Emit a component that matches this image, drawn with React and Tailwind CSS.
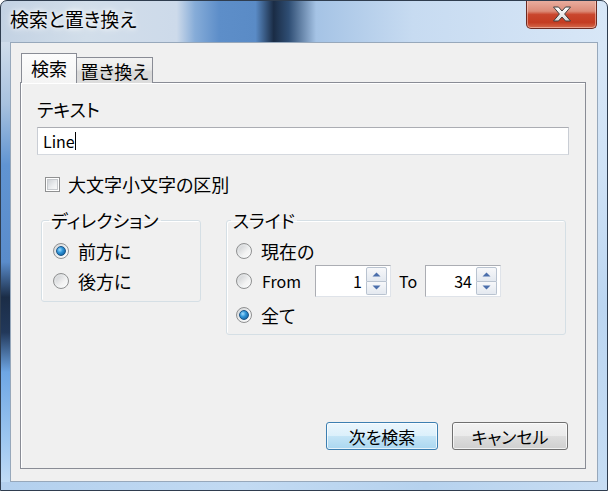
import React from "react";

const Radio = ({ checked }) => (
  <span className="flex h-[16px] w-[16px] shrink-0 items-center justify-center rounded-full border border-[#8f9091] bg-[linear-gradient(135deg,#d2d4d6_0%,#eef0f1_55%,#ffffff_100%)]">
    {checked ? (
      <span className="h-[10px] w-[10px] rounded-full border border-[#1a5588] bg-[radial-gradient(circle_at_35%_35%,#9fdcff_0%,#2f95d8_40%,#0b4f8c_100%)]" />
    ) : (
      <span className="h-[10px] w-[10px] rounded-full bg-[linear-gradient(135deg,#cfd1d4_0%,#f4f4f4_70%)]" />
    )}
  </span>
);

const Arrow = ({ up }) => (
  <svg width="9" height="5" viewBox="0 0 9 5">
    <path d={up ? "M0.5 4.5 L4.5 0.5 L8.5 4.5 Z" : "M0.5 0.5 L4.5 4.5 L8.5 0.5 Z"} fill="#4a6eab" />
  </svg>
);

const Spin = ({ value }) => (
  <div className="flex h-[32px] w-[76px] items-center border border-[#abadb3] border-b-[#dfe3e9] border-r-[#dfe3e9] bg-white pr-[3px]">
    <span className="flex-1 pr-[4px] text-right text-[16px] leading-none">{value}</span>
    <div className="flex h-[28px] w-[21px] flex-col">
      <div className="flex flex-1 items-center justify-center rounded-t-[2px] border border-[#b9c3d0] bg-[linear-gradient(180deg,#f7f8fa_0%,#e4e9f0_100%)]">
        <Arrow up />
      </div>
      <div className="flex flex-1 items-center justify-center rounded-b-[2px] border border-t-0 border-[#b9c3d0] bg-[linear-gradient(180deg,#f7f8fa_0%,#e4e9f0_100%)]">
        <Arrow />
      </div>
    </div>
  </div>
);

const App = () => {
  return (
    <div className="flex h-[491px] w-[608px] flex-col overflow-hidden rounded-t-[7px] border border-[#2f3d4f] bg-[linear-gradient(90deg,#c3d2e3_0%,#d2deea_14%,#cddaea_29%,#86acd8_32%,#5d8ec9_36%,#5a8bc6_42%,#1a2c45_45%,#2f4e74_47.5%,#a5c3e5_52%,#c7dbf1_68%,#d8e7f7_100%)] font-['Noto_Sans_CJK_JP',sans-serif] text-black [font-feature-settings:'palt']">
      {/* title bar */}
      <div className="flex h-[41px] items-start justify-between pl-[9px] pr-[10px]">
        <span className="mt-[5px] text-[19px] leading-[26px] [text-shadow:0_0_8px_#ffffff,0_0_4px_#ffffff]">
          検索と置き換え
        </span>
        <button className="-mt-px flex h-[29px] w-[71px] items-center justify-center rounded-b-[5px] border border-t-0 border-[#6b2a22] bg-[linear-gradient(180deg,#eab0a2_0%,#dc8b78_40%,#c9462d_52%,#c43c22_80%,#d46a4c_100%)] shadow-[inset_0_0_0_1px_rgba(255,220,210,0.5)]">
          <svg width="20" height="16" viewBox="0 0 20 16">
            <defs>
              <linearGradient id="xg" x1="0" y1="0" x2="0" y2="1">
                <stop offset="0" stopColor="#ffffff" />
                <stop offset="1" stopColor="#d8d8d8" />
              </linearGradient>
            </defs>
            <path
              d="M1.5 1 H6.5 L10 5 L13.5 1 H18.5 L12.6 8 L18.5 15 H13.5 L10 11 L6.5 15 H1.5 L7.4 8 Z"
              fill="url(#xg)"
              stroke="#3d3d3d"
              strokeWidth="1"
              strokeLinejoin="round"
            />
          </svg>
        </button>
      </div>

      <div className="flex flex-1">
        <div className="w-[9px] bg-[linear-gradient(180deg,#cfdceb_0%,#a8c2df_14%,#6094d2_28%,#5a8ccb_50%,#1b2d47_58%,#22385a_66%,#6ea6e4_75%,#9cc6f0_90%,#c0dbf5_100%)]" />

        {/* client area */}
        <div className="flex flex-1 flex-col border border-[#97a8bb] bg-[#f0f0f0] pb-[12px] pl-[9px] pr-[11px] pt-[10px]">
          {/* tabs */}
          <div className="relative z-10 -mb-px flex items-end pl-px">
            <div className="flex h-[30px] w-[56px] items-center justify-center border border-b-0 border-[#898c95] bg-[linear-gradient(180deg,#fcfcfc_0%,#f4f4f4_100%)] pb-[2px] text-[18px] leading-none">
              検索
            </div>
            <div className="flex h-[26px] w-[76px] items-center justify-center border border-b-0 border-l-0 border-[#898c95] bg-[linear-gradient(180deg,#f3f3f3_0%,#e9e9e9_45%,#d9d9d9_55%,#dcdcdc_100%)] text-[18px] leading-none">
              置き換え
            </div>
          </div>

          {/* tab panel */}
          <div className="flex flex-1 flex-col border border-[#898c95] bg-[#f0f0f0] shadow-[inset_1px_1px_0_#ffffff]">
            <div className="flex flex-col pl-[16px] pt-[16px]">
              <span className="text-[18px] leading-[21px]">テキスト</span>
              <div className="mt-[7px] flex h-[28px] w-[532px] items-center border border-[#abadb3] border-b-[#d5d9df] border-l-[#c9cdd4] border-r-[#c9cdd4] bg-white pl-[5px]">
                <span className="text-[16px] leading-none">Line</span>
                <span className="h-[18px] w-px bg-black" />
              </div>

              <div className="ml-[8px] mt-[19px] flex h-[20px] items-center gap-[8px]">
                <span className="flex h-[15px] w-[15px] items-center justify-center border border-[#8f9091] bg-white">
                  <span className="h-[11px] w-[11px] border border-[#c6c9cd] bg-[linear-gradient(135deg,#cfd2d6_0%,#eceef0_60%,#f8f8f8_100%)]" />
                </span>
                <span className="text-[18px] leading-none">大文字小文字の区別</span>
              </div>

              <div className="mt-[17px] flex items-start">
                <fieldset className="ml-[4px] w-[160px] rounded-[3px] border border-[#d5dfe5] pb-[10px] pl-[7px] shadow-[inset_1px_1px_0_#ffffff]">
                  <legend className="px-[2px] text-[18px] leading-[19px]">ディレクション</legend>
                  <div className="ml-[4px] mt-[11px] flex h-[20px] items-center gap-[9px]">
                    <Radio checked />
                    <span className="text-[18px] leading-none">前方に</span>
                  </div>
                  <div className="ml-[4px] mt-[10px] flex h-[20px] items-center gap-[9px]">
                    <Radio />
                    <span className="text-[18px] leading-none">後方に</span>
                  </div>
                </fieldset>

                <fieldset className="ml-[25px] w-[340px] rounded-[3px] border border-[#d5dfe5] pb-[9px] pl-[4px] shadow-[inset_1px_1px_0_#ffffff]">
                  <legend className="px-[2px] text-[18px] leading-[19px]">スライド</legend>
                  <div className="ml-[5px] mt-[11px] flex h-[20px] items-center gap-[9px]">
                    <Radio />
                    <span className="text-[18px] leading-none">現在の</span>
                  </div>
                  <div className="ml-[5px] mt-[4px] flex h-[32px] items-center">
                    <Radio />
                    <span className="ml-[10px] w-[53px] text-[16px] leading-none">From</span>
                    <Spin value="1" />
                    <span className="w-[34px] pl-[8px] text-[16px] leading-none">To</span>
                    <Spin value="34" />
                  </div>
                  <div className="ml-[5px] mt-[8px] flex h-[20px] items-center gap-[9px]">
                    <Radio checked />
                    <span className="text-[18px] leading-none">全て</span>
                  </div>
                </fieldset>
              </div>
            </div>

            {/* buttons */}
            <div className="mt-auto flex justify-end gap-[14px] pb-[18px] pr-[17px]">
              <button className="flex h-[28px] w-[112px] items-center justify-center rounded-[3px] border border-[#3c7fb1] bg-[linear-gradient(180deg,#ebf6fd_0%,#dcf0fb_48%,#c3e4f6_52%,#aad7f0_100%)] text-[17px] leading-none shadow-[inset_0_0_0_1px_rgba(255,255,255,0.7)]">
                次を検索
              </button>
              <button className="flex h-[28px] w-[116px] items-center justify-center rounded-[3px] border border-[#707070] bg-[linear-gradient(180deg,#f2f2f2_0%,#ebebeb_48%,#dddddd_52%,#cfcfcf_100%)] text-[17px] leading-none shadow-[inset_0_0_0_1px_rgba(255,255,255,0.7)]">
                キャンセル
              </button>
            </div>
          </div>
        </div>

        <div className="w-[9px] bg-[linear-gradient(180deg,#d8e7f7_0%,#cfe2f6_30%,#bcd6f1_60%,#c6ddf4_100%)]" />
      </div>
      <div className="h-[8px] bg-[linear-gradient(90deg,#b3d0ee_0%,#c2daf2_40%,#b6d2ee_70%,#c8ddf3_100%)]" />
    </div>
  );
};

export default App;
